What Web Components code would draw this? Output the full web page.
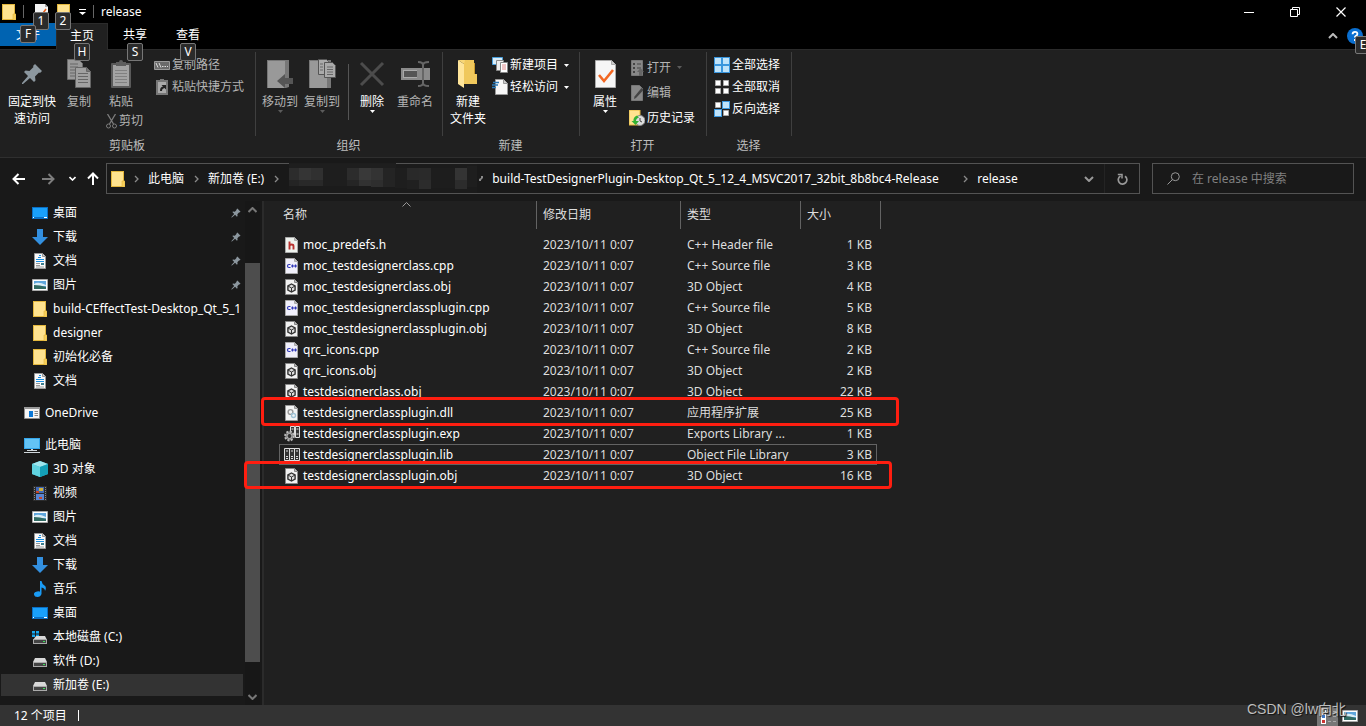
<!DOCTYPE html>
<html lang="zh-CN">
<head>
<meta charset="utf-8">
<title>release</title>
<style>
html,body{height:100%;margin:0}
body{background:#191919;color:#fff;font:12px/16px "Noto Sans","Noto Sans CJK SC",sans-serif;overflow:hidden}
</style>
</head>
<body>
<fx-window></fx-window>
<script>
const ICONS = {
folder:[14,16,'<path d="M0 0h13v11h1v5H0z" fill="#e3b73d"/><path d="M1 1h11v14H1z" fill="#ffe38f"/><path d="M11 10h3v6h-3z" fill="#f7cf5a" stroke="#e3b73d" stroke-width=".6"/>'],
check:[13,16,'<path d="M0 0h10l3 3v13H0z" fill="#f4f4f4"/><path d="M10 0v3h3" fill="#aaa"/><path d="M3 9l3 3 5-7" fill="none" stroke="#e8601c" stroke-width="1.6"/>'],
qat:[7,6,'<path d="M0 0h7v1H0zM0 3h7L3.5 6z" fill="#fff"/>'],
min:[10,10,'<path d="M0 5h10v1H0z" fill="#fff"/>'],
restore:[10,10,'<path d="M.5 2.500h7v7h-7zM2.500 2.500v-2h7v7h-2" fill="none" stroke="#fff"/>'],
close:[10,10,'<path d="M.5.5l9 9M9.500.5l-9 9" stroke="#fff" stroke-width="1.200"/>'],
up2:[10,6,'<path d="M1 5l4-4 4 4" fill="none" stroke="#bbb" stroke-width="2"/>'],
sup:[9,6,'<path d="M.5 5l4-4 4 4" fill="none" stroke="#777" stroke-width="2"/>'],
sdown:[9,6,'<path d="M.5 1l4 4 4-4" fill="none" stroke="#777" stroke-width="2"/>'],
caret:[9,5,'<path d="M.5 4.500l4-4 4 4" fill="none" stroke="#999"/>'],
down2:[10,6,'<path d="M1 1l4 4 4-4" fill="none" stroke="#999" stroke-width="2"/>'],
down:[7,5,'<path d="M.5 1l3 3 3-3" fill="none" stroke="#fff" stroke-width="1.600"/>'],
right:[5,8,'<path d="M1 1l3 3-3 3" fill="none" stroke="#8a8a8a" stroke-width="1.300"/>'],
slash:[4,5,'<path d="M0 5V3l2-1V0h2v2L2 4v1z" fill="#8a8a8a"/>'],
tri:[5,3,'<path d="M0 0h5L2.500 3z" fill="currentColor"/>'],
help:[16,16,'<circle cx="8" cy="8" r="8" fill="#0a6fd0"/><path d="M5.600 6.200Q5.600 3.800 8 3.800T10.400 6Q10.400 7 9 7.800T8 9.500" fill="none" stroke="#fff" stroke-width="1.800"/><path d="M7 11h2v2H7z" fill="#fff"/>'],
back:[13,12,'<path d="M6.500 1L1.500 6l5 5M2 6h11" fill="none" stroke="#fff" stroke-width="2"/>'],
fwd:[13,12,'<path d="M6.500 1l5 5-5 5M11 6H0" fill="none" stroke="#7d7d7d" stroke-width="2"/>'],
up:[12,13,'<path d="M1 6.500l5-5 5 5M6 2v11" fill="none" stroke="#fff" stroke-width="2"/>'],
refresh:[11,12,'<path d="M3.500 3A4.300 4.300 0 1 0 8 3.200" fill="none" stroke="#999" stroke-width="1.700"/><path d="M.8 1.500h4.200v4" fill="none" stroke="#999" stroke-width="1.500"/>'],
search:[13,13,'<circle cx="8.300" cy="4.700" r="4" fill="none" stroke="#999"/><path d="M5.500 7.500L.5 12.500" stroke="#999"/>'],
pin:[22,22,'<path d="M14 1l7 7-2 2-1-.5-4 4 .5 4-1.500 1.500-4-4L2 21H1v-1l6-7-4-4 1.500-1.500 4 .5 4-4-.5-1z" fill="#8c979f"/>'],
copy:[24,29,'<path d="M.5.5h11l4 4v16H.5z" fill="#9a9a9a" stroke="#6c6c6c"/><path d="M3 5h8M3 8h8M3 11h8M3 14h5M3 17h5" stroke="#666"/><path d="M8.500 8.500h11l4 4v16h-15z" fill="#a0a0a0" stroke="#666"/><path d="M19.500 8.500v4h4" fill="#777" stroke="#666"/><path d="M11 14.500h10M11 17.500h10M11 20.500h10M11 23.500h10" stroke="#666"/>'],
paste:[20,28,'<rect y="3" width="20" height="25" rx="1" fill="#5a5a5a"/><path d="M2 5h16v21H2z" fill="#a3a3a3"/><path d="M5 2h3a2 2 0 0 1 4 0h3v4H5z" fill="#5e5e5e"/><path d="M4 10.500h12M4 13.500h12M4 16.500h12M4 19.500h12M4 22.500h12" stroke="#808080"/>'],
cut:[11,15,'<path d="M1.500 0l6 10M9.500 0l-6 10" stroke="#7d7d7d" stroke-width="1.300"/><circle cx="2.500" cy="12" r="2" fill="none" stroke="#7d7d7d"/><circle cx="8.500" cy="12" r="2" fill="none" stroke="#7d7d7d"/>'],
path:[16,16,'<path d="M.5 4.500h15v8H.5z" fill="#6a6a6a" stroke="#999"/><path d="M2 6l2 4.500M5 6l2 4.500M8 9.500h1.500M10.500 9.500H12M13 9.500h1" stroke="#ddd"/>'],
shortcut:[16,16,'<path d="M2 1h12v15H2z" fill="#777"/><path d="M4 3h8v11H4z" fill="#aaa"/><path d="M6 0h4v3H6z" fill="#777"/><path d="M6 12c0-3 1-4 3-4.500L7.500 6H12v4.500L10.500 9C9 9.500 8 10 8 12z" fill="#222"/>'],
move:[27,30,'<path d="M0 1h22v27l-3 1H0z" fill="#777"/><path d="M1 2h17v27H1z" fill="#999"/><path d="M10 22l8-7v4h8v6h-8v4z" fill="#555"/>'],
copyto:[27,30,'<path d="M0 1h22v28H0z" fill="#777"/><path d="M1 2h17v27H1z" fill="#999"/><path d="M9.500.5h8l2 2v13h-10z" fill="#aaa" stroke="#555"/><path d="M15.500 3.500h8l3 3v12h-11z" fill="#aaa" stroke="#555"/><path d="M18 8h6M18 10.500h6M18 13h6M18 15.500h6M11 5h3M11 8h3M11 11h3" stroke="#666"/>'],
del:[26,26,'<path d="M2 2l22 22M24 2L2 24" stroke="#4c4c4c" stroke-width="3"/>'],
rename:[29,26,'<path d="M0 7h29v12H0z" fill="#8a8a8a"/><path d="M2 9h14v8H2z" fill="#aaa"/><path d="M3 10h13v6H3z" fill="#555"/><path d="M17 1q5 0 5 3v18q0 3-5 3M28 1q-6 0-6 3v18q0 3 6 3" fill="none" stroke="#666" stroke-width="2"/>'],
newf:[20,28,'<path d="M6 0h10v14h3v10H5z" fill="#f0c85c"/><path d="M16 3h1v11h-1z" fill="#c99a2c"/><path d="M0 0l6 4v24l-6-4z" fill="#ffe59a"/><path d="M0 0h7l-1 4z" fill="#f9d776"/>'],
newi:[16,16,'<path d="M.5.500h10v7H.5z" fill="#d9edf9" stroke="#4aa0dc"/><path d="M4.500 3.500h7v10h-7z" fill="#eee" stroke="#888"/><path d="M8.500 5.500h7v10h-7z" fill="#fff" stroke="#888"/><path d="M10 8h4M10 10h4M10 12h4" stroke="#e28a8a"/>'],
easy:[16,16,'<path d="M3.500.5h8l4 4v11h-12z" fill="#f7f7f7" stroke="#999"/><path d="M11.500.5v4h4" fill="#ccc" stroke="#999"/><path d="M1 3.500h6M0 6h6M0 8.500h4" stroke="#2a7ab8" stroke-width="1.300"/>'],
prop:[21,28,'<path d="M.5.5h16l4 4v23H.5z" fill="#f6f6f6" stroke="#aaa"/><path d="M16.500.5v4h4" fill="#ccc" stroke="#aaa"/><path d="M4 15l5 6 9-11" fill="none" stroke="#f26722" stroke-width="2.600"/>'],
open:[16,16,'<path d="M2.500.5h11v15h-11z" fill="#888" stroke="#777"/><path d="M4 3h2v2H4zM4 7h2v2H4zM4 11h2v2H4z" fill="#444"/><path d="M8 4h4M8 8h4" stroke="#444"/><path d="M8 12l3.500-4 3.500 4h-2v4h-3v-4z" fill="#666"/>'],
edit:[16,16,'<path d="M2.500.5h8l3 3v12h-11z" fill="#888" stroke="#777"/><path d="M14.500 5L7 13l-2 1 .5-2.500L12.500 3z" fill="#444"/>'],
hist:[16,16,'<path d="M0 0h11v15H0z" fill="#ffe38f" stroke="#e3b73d"/><circle cx="11" cy="10.500" r="5" fill="#ddd" stroke="#888"/><path d="M11 8v3l2 1" fill="none" stroke="#444"/><path d="M8 5.500Q4 7 4.500 11H2.500l4 4 3.500-4H7q0-2.500 3-3.500z" fill="#34b233"/>'],
all:[16,16,'<path d="M0 0h16v16H0z" fill="#3a96dd"/><path d="M1 1h6v6H1zM9 1h6v6H9zM1 9h6v6H1zM9 9h6v6H9z" fill="#bfe3fa"/>'],
none:[16,16,'<path d="M1.500 1.500h5v5h-5zM9.500 1.500h5v5h-5zM1.500 9.500h5v5h-5zM9.500 9.500h5v5h-5z" fill="#fff" stroke="#aaa"/>'],
inv:[16,16,'<path d="M8 0h8v8H8zM0 8h8v8H0z" fill="#3a96dd"/><path d="M9 1h6v6H9zM1 9h6v6H1z" fill="#bfe3fa"/><path d="M1.500 1.500h5v5h-5zM9.500 9.500h5v5h-5z" fill="#fff" stroke="#aaa"/>'],
desktop:[16,12,'<path d="M0 0h16v12H0z" fill="#0a6fc4"/><path d="M1 1h14v9H1z" fill="#1aa0fa"/><path d="M1 10.500h1M12 10.500h3" stroke="#fff"/>'],
dl:[16,16,'<path d="M5 0h6v8h5l-8 8-8-8h5z" fill="#3390e0"/>'],
doc:[12,16,'<path d="M.5.500h8l3 3v12H.5z" fill="#fafafa" stroke="#999"/><path d="M8.500.5v3h3" fill="#ccc" stroke="#999"/><path d="M2 6.500h8M2 8.500h8M4 4.500h3M5 2.500h2" stroke="#1a8fe0"/><path d="M2 10.500h4M2 12.500h4M2 14h8" stroke="#999"/><path d="M7 10h3v2H7z" fill="#3b7d8c"/>'],
pic:[16,12,'<path d="M.5.500h15v11H.5z" fill="#fff" stroke="#aaa"/><path d="M2 2h12v8H2z" fill="#5fa6dc"/><path d="M2 5q4-3 12 1v1H2z" fill="#d9edf7"/><path d="M2 6q6 0 12 2v2H2z" fill="#316b63"/>'],
one:[16,12,'<path d="M.5.500h15v11H.5z" fill="#f5f5f5" stroke="#8d8d8d"/><path d="M0 0h16v2H0z" fill="#999"/><path d="M5 4h4v6H5z" fill="#0b78d7"/><path d="M10.500 4.500H14M10.500 6.500H14M10.500 8.500H14" stroke="#888"/>'],
pc:[16,15,'<path d="M0 0h16v11H0z" fill="#35a7ec"/><path d="M1 1h14v9H1z" fill="#63c3f5"/><path d="M7 11h2v2H7zM3 12h10v1H3zM0 14h16v1H0z" fill="#cfd6da"/>'],
cube:[16,16,'<path d="M0 3l8-3 8 3v10l-8 3-8-3z" fill="#35bcd0"/><path d="M0 3l8-3 8 3-8 3z" fill="#9fe6ee"/><path d="M0 3l8 3v10l-8-3z" fill="#5fd3e0"/><path d="M8 6l8-3v10l-8 3z" fill="#14a0b8"/>'],
video:[14,15,'<path d="M0 0h14v15H0z" fill="#2b2b2b"/><path d="M1.500 1v14M12.500 1v14" stroke="#888" stroke-dasharray="1 1"/><path d="M3 1h8v6H3z" fill="#4169b8"/><path d="M3 8h8v6H3z" fill="#5a84d0"/><path d="M6 2h4v3H6z" fill="#d0b13a"/><path d="M3 5h3v2H3zM6 11h3v2H6z" fill="#c4472b"/>'],
music:[12,16,'<path d="M6 0h1.500q.5 3 3 4.500T11 10q0-3-3.500-3.500V13q-1 3-4 3T0 13.500 3 10.500t3 .5z" fill="#1a9bf4"/>'],
cdisk:[16,13,'<path d="M0 0h3v2.500H0zM4 0h3v2.500H4zM0 3.500h3V6H0zM4 3.500h3V6H4z" fill="#16a6ee"/><path d="M4 5h9l2 4H1z" fill="#d8d8d8"/><path d="M1 8h14v5H1z" fill="#aaa"/><path d="M2 9h12v3H2z" fill="#444"/><path d="M11 10h2v1h-2z" fill="#3de05a"/>'],
disk:[14,11,'<path d="M2 2h10l2 4H0z" fill="#d8d8d8"/><path d="M0 6h14v5H0z" fill="#aaa"/><path d="M1 7h12v3H1z" fill="#444"/><path d="M10 8h2v1h-2z" fill="#3de05a"/>'],
h:[16,16,'<path d="M1.500.500h9l3 3v12h-12z" fill="#eef3ee" stroke="#aaa"/><path d="M10.500.5v3h3" fill="#bbb" stroke="#aaa"/><path d="M5.500 4.500v8M5.500 9q0-1.500 2-1.500t2 1.500v3.500" fill="none" stroke="#b83230" stroke-width="1.900"/>'],
cpp:[16,16,'<path d="M1.500.500h9l3 3v12h-12z" fill="#f1f0fb" stroke="#aaa"/><path d="M10.500.5v3h3" fill="#bbb" stroke="#aaa"/><path d="M6.500 6.500H5q-1.500 0-1.500 1.500T5 9.500h1.500M7 8h3M10 8h3M8.500 6.500v3M11.500 6.500v3" fill="none" stroke="#3038b8" stroke-width="1.200"/>'],
obj:[16,16,'<path d="M1.500.500h9l3 3v12h-12z" fill="#f2f2f2" stroke="#888"/><path d="M10.500.5v3h3" fill="#bbb" stroke="#888"/><path d="M7.500 5l3.600 2v4L7.500 13l-3.600-2V7z" fill="#ddd" stroke="#333" stroke-width="1.400"/><path d="M4 7l3.500 2L11 7M7.500 9v4" fill="none" stroke="#333"/>'],
dll:[16,16,'<path d="M1.500.500h9l3 3v12h-12z" fill="#f4f4f4" stroke="#999"/><path d="M10.500.5v3h3" fill="#bbb" stroke="#999"/><circle cx="6.500" cy="7" r="2.400" fill="none" stroke="#999" stroke-width="1.400"/><circle cx="9.500" cy="10.500" r="2" fill="none" stroke="#9fc3d6" stroke-width="1.400"/>'],
exp:[16,16,'<path d="M6.500.500h4v9h-4zM11.500.500h4v11h-4z" fill="#333" stroke="#ddd"/><path d="M12.500 3h2M12.500 8h2M7.500 3h2" stroke="#ddd"/><circle cx="5.500" cy="10" r="4.400" fill="#777" stroke="#bbb" stroke-width="2" stroke-dasharray="2 1.400"/><circle cx="5.500" cy="10" r="2.500" fill="#333" stroke="#bbb"/>'],
lib:[16,16,'<path d="M.5 1.500h5v12h-5zM5.500 1.500h5v12h-5zM10.500 1.500h5v12h-5z" fill="#333" stroke="#ddd"/><path d="M2 4h2M7 4h2M12 4h2M2 9.500h2M7 9.500h2M12 9.500h2M2 11.500h2M7 11.500h2M12 11.500h2" stroke="#ddd"/>'],
details:[21,20,'<path d="M0 0h21v20H0z" fill="#777"/><path d="M4 2h5v16H4z" fill="#fff"/><path d="M5 4h3v3H5z" fill="#8aa"/><path d="M5 9h3v3H5z" fill="#3d78c8"/><path d="M5 14h3v3H5z" fill="#c33"/><path d="M11 5.500h3M16 5.500h3M11 10.500h3M16 10.500h3M11 15.500h3M16 15.500h3" stroke="#aaa"/>'],
};
const define = (name, html, setup) => {
  const t = document.createElement('template');
  t.innerHTML = html;
  customElements.define(name, class extends HTMLElement {
    constructor(){ super(); this.attachShadow({mode:'open'}).append(t.content.cloneNode(true)); }
    connectedCallback(){ if (setup && !this.ready) { this.ready = true; setup(this, this.shadowRoot); } }
  });
};
const BTN = 'button{all:unset;box-sizing:border-box;display:flex;align-items:center}';

define('fx-icon', '<style>:host{display:inline-flex;flex:none}svg{display:block}</style>', (el, root) => {
  const [w, h, body] = ICONS[el.getAttribute('name')];
  const s = +(el.getAttribute('size') || w);
  root.innerHTML += `<svg width="${s}" height="${Math.round(h * s / w)}" viewBox="0 0 ${w} ${h}" aria-hidden="true">${body}</svg>`;
});

define('fx-keytip', `<style>:host{position:absolute;z-index:3;box-sizing:border-box;width:16px;height:18px;border:1px solid #777;border-radius:2px;background:#2b2b2b;color:#fff;line-height:16px;text-align:center}</style><slot></slot>`);

define('fx-titlebar', `<style>${BTN}
:host{display:flex;height:23px;background:#000;align-items:center}
.q{position:relative;margin-left:9px}
.q fx-keytip{top:8px;left:-2px}
.sep{width:1px;height:13px;background:#666;margin-left:7px}
.title{margin:0 0 0 7px;font-weight:400;font-size:12px;line-height:16px;flex:1}
.win{display:flex;padding-right:2px}.win button{width:46px;height:20px;justify-content:center}
.first{margin-left:11px}.more{margin-left:8px}
.app{margin-left:2px}
</style>
<fx-icon class="app" name="folder"></fx-icon><span class="sep"></span>
<button class="q first" aria-label="属性"><fx-icon name="check"></fx-icon><fx-keytip>1</fx-keytip></button>
<button class="q" aria-label="新建文件夹"><fx-icon name="folder"></fx-icon><fx-keytip>2</fx-keytip></button>
<button class="more" aria-label="自定义"><fx-icon name="qat"></fx-icon></button><span class="sep"></span>
<h1 class="title">release</h1>
<div class="win"><button aria-label="最小化"><fx-icon name="min"></fx-icon></button><button aria-label="还原"><fx-icon name="restore"></fx-icon></button><button aria-label="关闭"><fx-icon name="close"></fx-icon></button></div>`);

define('fx-tabs', `<style>${BTN}
:host{display:flex;height:26px;background:#000}
.t{position:relative;width:54px;height:24px;justify-content:center}
.t fx-keytip{top:20px;left:19px}
.file{width:56px;height:23px;background:#0063b1}.file fx-keytip{top:2px;left:20px}
.view{width:52px}.view fx-keytip{left:18px}
.on{z-index:1;width:52px;height:27px;padding-bottom:3px;background:#202020;border:1px solid #2b2b2b;border-bottom:0}
.on fx-keytip{top:19px;left:17px}
.r{margin-left:auto;display:flex;align-items:center;gap:9px;padding-right:3px}
.help{position:relative}.help fx-keytip{left:8px;top:8px}
</style>
<button class="t file">文件<fx-keytip>F</fx-keytip></button><button class="t on">主页<fx-keytip>H</fx-keytip></button><button class="t">共享<fx-keytip>S</fx-keytip></button><button class="t view">查看<fx-keytip>V</fx-keytip></button>
<div class="r"><button aria-label="折叠功能区"><fx-icon name="up2"></fx-icon></button><button class="help" aria-label="帮助"><fx-icon name="help"></fx-icon><fx-keytip>E</fx-keytip></button></div>`);

define('fx-group', `<style>:host{display:flex;flex-direction:column;position:relative;flex:none}
.c{display:flex;box-sizing:border-box;height:86px;padding:4px var(--pr,11px) 0 3px}
.l{height:20px;line-height:20px;padding-right:2px;text-align:center;color:#bdbdbd}
:host::after{content:"";position:absolute;right:0;top:2px;width:1px;height:84px;background:#3f3f3f}</style>
<div class="c"><slot></slot></div><div class="l"></div>`, (el, r) => { r.querySelector('.l').textContent = el.getAttribute('label'); });

define('fx-big', `<style>${BTN}
:host{display:block;flex:none;width:var(--w,42px);color:var(--c,#fff)}
button{width:100%;flex-direction:column}
.i{height:39px;display:flex;align-items:center}
.t{line-height:17px;text-align:center;white-space:nowrap}
.a{height:4px;display:none;color:var(--a,#fff)}:host([menu]) .a{display:flex}</style>
<button><span class="i"></span><span class="t"><slot></slot></span><span class="a"><fx-icon name="tri"></fx-icon></span></button>`,
(el, r) => { r.querySelector('.i').innerHTML = `<fx-icon name="${el.getAttribute('icon')}"></fx-icon>`; });

define('fx-small', `<style>${BTN}
:host{display:block;color:var(--c,#fff)}
button{height:var(--h,22px);gap:2px;white-space:nowrap}
.i{display:flex}.a{display:none;margin-left:4px;color:var(--a,#fff)}:host([menu]) .a{display:flex}</style>
<button><span class="i"></span><slot></slot><span class="a"><fx-icon name="tri"></fx-icon></span></button>`,
(el, r) => { r.querySelector('.i').innerHTML = `<fx-icon name="${el.getAttribute('icon')}"></fx-icon>`; });

define('fx-ribbon', `<style>
:host{display:flex;box-sizing:border-box;height:109px;background:#202020;border-top:1px solid #2b2b2b;border-bottom:1px solid #2f2f2f}
.g{--c:#b4b4b4;--a:#5c5c5c}
.col{display:flex;flex-direction:column}
.in{padding-left:2px}.in4{padding-left:4px}
.tall{--h:25px;padding-top:1px}
.pastes{padding-left:3px;width:54px}
.cut{padding-left:6px}
.wide{--w:58px}.slim{--w:36px}.mid{--w:44px}
fx-group{--pr:12px}fx-group.org{--pr:7px}fx-group.new{--pr:11px}
.line{width:1px;height:56px;margin:10px 1px 0 5px;background:#555}
</style>
<fx-group label="剪贴板">
 <fx-big class="wide" icon="pin">固定到快<br>速访问</fx-big><fx-big class="g slim" icon="copy">复制</fx-big>
 <div class="col pastes"><fx-big class="g" icon="paste">粘贴</fx-big><fx-small class="g cut" icon="cut">剪切</fx-small></div>
 <div class="col"><fx-small class="g" icon="path">复制路径</fx-small><fx-small class="g" icon="shortcut">粘贴快捷方式</fx-small></div>
</fx-group>
<fx-group class="org" label="组织">
 <fx-big class="g" icon="move" menu>移动到</fx-big><fx-big class="g" icon="copyto" menu>复制到</fx-big><span class="line"></span><fx-big class="mid" icon="del" menu>删除</fx-big><fx-big class="g" icon="rename">重命名</fx-big>
</fx-group>
<fx-group class="new" label="新建">
 <fx-big class="mid" icon="newf">新建<br>文件夹</fx-big>
 <div class="col in"><fx-small icon="newi" menu>新建项目</fx-small><fx-small icon="easy" menu>轻松访问</fx-small></div>
</fx-group>
<fx-group label="打开">
 <fx-big class="mid" icon="prop" menu>属性</fx-big>
 <div class="col in tall"><fx-small class="g" icon="open" menu>打开</fx-small><fx-small class="g" icon="edit">编辑</fx-small><fx-small icon="hist">历史记录</fx-small></div>
</fx-group>
<fx-group label="选择">
 <div class="col in4"><fx-small icon="all">全部选择</fx-small><fx-small icon="none">全部取消</fx-small><fx-small icon="inv">反向选择</fx-small></div>
</fx-group>`);

define('fx-mosaic', `<style>:host{display:block;flex:none;position:relative;width:188px;height:29px;background:#1b1b1b}:host::before{content:"";position:absolute;left:0;top:-1px;width:107px;height:1px;background:#1d1d1d}svg{display:block}</style><svg width="188" height="29" aria-hidden="true"></svg>`, (el, r) => {
  const cells = [[0,0,107,4,'#1e1e1e'],[0,4,10,12,'#2c2c2c'],[10,4,12,12,'#353535'],[22,4,12,12,'#303030'],[0,16,10,6,'#242424'],[10,16,24,6,'#292929'],[34,4,24,18,'#1e1e1e'],[58,4,12,12,'#2c2c2c'],[70,4,12,12,'#393939'],[82,4,12,12,'#333'],[94,4,12,19,'#242424'],[58,16,12,6,'#252525'],[70,16,12,6,'#323232'],[82,16,12,7,'#2e2e2e'],[106,4,12,20,'#1e1e1e'],[118,4,12,12,'#292929'],[130,4,12,12,'#2a2a2a'],[118,16,12,9,'#202020'],[130,16,12,9,'#2c2c2c'],[142,4,24,20,'#1d1d1d'],[166,4,12,12,'#343434'],[166,16,12,9,'#2c2c2c'],[178,2,10,21,'#1e1e1e']];
  r.querySelector('svg').innerHTML = cells.map(([x, y, w, h, c]) => `<path d="M${x} ${y}h${w}v${h}h-${w}z" fill="${c}"/>`).join('');
});

define('fx-nav', `<style>${BTN}
:host{display:flex;box-sizing:border-box;height:43px;padding:5px 12px 0 0;background:#191919}
.n{height:31px;justify-content:center}
.n.b{width:37px}.n.f{width:22px}.n.d{width:26px}.n.u{width:15px}
.bar{flex:1;display:flex;align-items:center;box-sizing:border-box;height:31px;border:1px solid #535353;padding-left:4px;margin-left:6px;min-width:0}
.crumb{margin:0 10px 0 9px;white-space:nowrap}
.crumb.long{min-width:461px}
.folder{margin-right:9px}
fx-mosaic{margin:0 2px 0 10px}
.dd{margin-left:auto;width:32px;height:29px;justify-content:center;border-right:1px solid #242424}
.rf{width:34px;height:29px;justify-content:center}
.s{display:flex;align-items:center;box-sizing:border-box;width:202px;height:31px;margin-left:12px;border:1px solid #535353;padding-left:14px;gap:12px}
input{all:unset;flex:1;min-width:0;color:#fff;font:inherit}input::placeholder{color:#808080}
</style>
<button class="n b" aria-label="后退"><fx-icon name="back"></fx-icon></button><button class="n f" aria-label="前进"><fx-icon name="fwd"></fx-icon></button><button class="n d" aria-label="最近位置"><fx-icon name="down"></fx-icon></button><button class="n u" aria-label="上移"><fx-icon name="up"></fx-icon></button>
<div class="bar"><fx-icon class="folder" name="folder"></fx-icon><fx-icon name="right"></fx-icon><button class="crumb">此电脑</button><fx-icon name="right"></fx-icon><button class="crumb">新加卷 (E:)</button><fx-icon name="right"></fx-icon><fx-mosaic></fx-mosaic><fx-icon name="slash"></fx-icon><button class="crumb long">build-TestDesignerPlugin-Desktop_Qt_5_12_4_MSVC2017_32bit_8b8bc4-Release</button><fx-icon name="right"></fx-icon><button class="crumb">release</button><button class="dd" aria-label="展开"><fx-icon name="down2"></fx-icon></button><button class="rf" aria-label="刷新"><fx-icon name="refresh"></fx-icon></button></div>
<label class="s"><fx-icon name="search"></fx-icon><input type="text" placeholder="在 release 中搜索" aria-label="搜索"></label>`);

define('fx-item', `<style>
:host{display:block;--in:32px}:host([top]){--in:24px;margin-top:8px}
a{display:flex;align-items:center;box-sizing:border-box;height:24px;padding-left:var(--in);color:inherit;text-decoration:none}
.i{flex:none;width:16px;display:flex;justify-content:center;margin-right:5px}
.t{flex:1;white-space:nowrap;overflow:hidden}
.p{display:none;margin-right:4px}:host([pinned]) .p{display:flex}
:host([on]) a{background:#333;margin:1px 2px 0 1px;padding-left:31px;height:22px}
</style><a href="#"><span class="i"></span><span class="t"><slot></slot></span><span class="p"><fx-icon name="pin" size="10"></fx-icon></span></a>`,
(el, r) => { r.querySelector('.i').innerHTML = `<fx-icon name="${el.getAttribute('icon')}"></fx-icon>`; });

define('fx-scroll', `<style>${BTN}
:host{display:flex;flex-direction:column;flex:none;width:15px;background:#171717}
button{height:17px;justify-content:center}
.track{flex:1;display:flex;flex-direction:column}.a{flex:45}.th{flex:399;background:#4d4d4d}.b{flex:26}</style>
<button aria-label="向上滚动"><fx-icon name="sup"></fx-icon></button><div class="track"><span class="a"></span><span class="th"></span><span class="b"></span></div><button aria-label="向下滚动"><fx-icon name="sdown"></fx-icon></button>`);

define('fx-tree', `<style>:host{display:flex;flex:none;width:260px;background:#191919}nav{flex:1;min-width:0}</style>
<nav aria-label="导航窗格">
<fx-item icon="desktop" pinned>桌面</fx-item><fx-item icon="dl" pinned>下载</fx-item><fx-item icon="doc" pinned>文档</fx-item><fx-item icon="pic" pinned>图片</fx-item>
<fx-item icon="folder">build-CEffectTest-Desktop_Qt_5_1</fx-item><fx-item icon="folder">designer</fx-item><fx-item icon="folder">初始化必备</fx-item><fx-item icon="doc">文档</fx-item>
<fx-item icon="one" top>OneDrive</fx-item><fx-item icon="pc" top>此电脑</fx-item>
<fx-item icon="cube">3D 对象</fx-item><fx-item icon="video">视频</fx-item><fx-item icon="pic">图片</fx-item><fx-item icon="doc">文档</fx-item><fx-item icon="dl">下载</fx-item><fx-item icon="music">音乐</fx-item><fx-item icon="desktop">桌面</fx-item><fx-item icon="cdisk">本地磁盘 (C:)</fx-item><fx-item icon="disk">软件 (D:)</fx-item><fx-item icon="disk" on>新加卷 (E:)</fx-item>
</nav><fx-scroll></fx-scroll>`);

define('fx-files', `<style>
:host{display:block;flex:1;min-width:0;position:relative;margin-left:2px;padding-left:15px;border-left:2px solid #2b2b2b;background:#202020}
table{border-collapse:separate;border-spacing:0;table-layout:fixed;width:598px}
th,td{box-sizing:border-box;padding:0 0 0 6px;text-align:left;font-weight:400;white-space:nowrap;color:#dedede}
th{height:28px;border-right:1px solid #636363;position:relative}
th:last-child{border-right:0}
th:last-child::after{content:"";position:absolute;right:-4px;top:0;height:28px;width:1px;background:#636363}
td{height:21px;line-height:19px;border:solid transparent;border-width:1px 0}
th:first-child{padding-left:4px}td:first-child{padding-left:5px}
td:last-child{text-align:right;padding-right:5px}
.n{display:flex;align-items:center;gap:3px;color:#fff}
.gap td{height:5px;border:0;padding:0}
.f td{border-color:#636363}.f td:first-child{border-left:1px solid #636363;padding-left:4px}.f td:last-child{border-right:1px solid #636363;padding-right:4px}
.sort{position:absolute;top:1px;left:123px}
.sort fx-icon{display:block}
</style>
<table><colgroup><col style="width:258px"><col style="width:144px"><col style="width:120px"><col style="width:76px"></colgroup>
<thead><tr><th>名称<span class="sort"><fx-icon name="caret"></fx-icon></span></th><th>修改日期</th><th>类型</th><th>大小</th></tr></thead><tbody><tr class="gap"><td colspan="4"></td></tr></tbody></table>`, (el, r) => {
  const H='C++ Header file', S='C++ Source file', O='3D Object';
  const rows = [['h','moc_predefs.h',H,1],['cpp','moc_testdesignerclass.cpp',S,3],['obj','moc_testdesignerclass.obj',O,4],['cpp','moc_testdesignerclassplugin.cpp',S,5],['obj','moc_testdesignerclassplugin.obj',O,8],['cpp','qrc_icons.cpp',S,2],['obj','qrc_icons.obj',O,2],['obj','testdesignerclass.obj',O,22],['dll','testdesignerclassplugin.dll','应用程序扩展',25],['exp','testdesignerclassplugin.exp','Exports Library ...',1],['lib','testdesignerclassplugin.lib','Object File Library',3],['obj','testdesignerclassplugin.obj',O,16]];
  r.querySelector('tbody').insertAdjacentHTML('beforeend', rows.map(([i,n,t,k]) => `<tr${i==='lib'?' class="f"':''}><td><span class="n"><fx-icon name="${i}"></fx-icon>${n}</span></td><td>2023/10/11 0:07</td><td>${t}</td><td>${k} KB</td></tr>`).join(''));
});

define('fx-status', `<style>${BTN}
:host{display:flex;align-items:center;height:21px;padding:0 8px 0 14px;background:#333;position:relative}
.bar{width:1px;height:11px;margin-left:11px;background:#fff}
.v{margin-left:auto;display:flex;align-items:center;gap:4px}
.wm{position:absolute;right:20px;top:-6px;font-size:14px;line-height:20px;color:#bdbdbd;text-shadow:1px 1px 1px #111;font-family:"Liberation Sans","Noto Sans CJK SC",sans-serif}
</style><span>12 个项目</span><span class="bar"></span>
<div class="v"><button aria-label="详细信息"><fx-icon name="details"></fx-icon></button><button aria-label="大图标"><fx-icon name="pic"></fx-icon></button></div><span class="wm">CSDN @lw向北</span>`);

define('fx-window', `<style>
:host{display:flex;flex-direction:column;height:100vh}
main{flex:1;display:flex;position:relative;min-height:0}
.mark{position:absolute;z-index:2;box-sizing:border-box;border:3px solid #ff1e10;border-radius:4px}
.m1{left:261px;top:196px;width:638px;height:29px}
.m2{left:244px;top:260px;width:648px;height:28px}
</style><fx-titlebar></fx-titlebar><fx-tabs></fx-tabs><fx-ribbon></fx-ribbon><fx-nav></fx-nav>
<main><fx-tree></fx-tree><fx-files></fx-files><span class="mark m1"></span><span class="mark m2"></span></main><fx-status></fx-status>`);
</script>
</body>
</html>
